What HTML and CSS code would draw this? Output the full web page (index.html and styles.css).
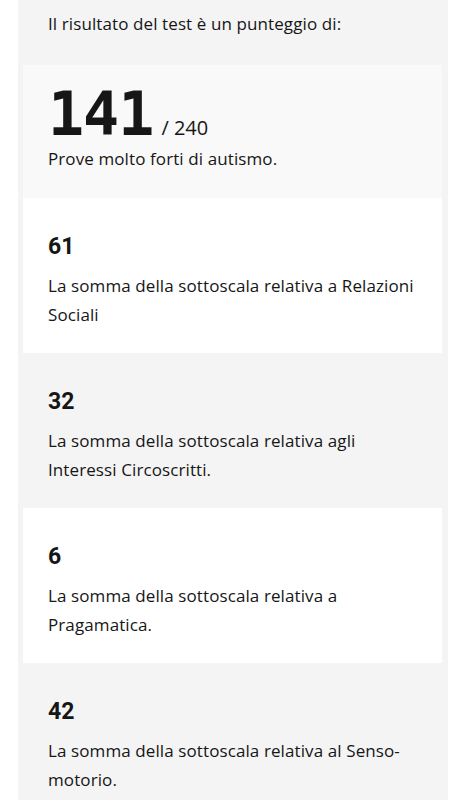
FILE: index.html
```html
<!DOCTYPE html>
<html lang="it">
<head>
<meta charset="utf-8">
<link rel="stylesheet" href="styles.css">
</head>
<body>
<main class="panel">
  <p class="intro">Il risultato del test è un punteggio di:</p>
  <section class="score">
    <div class="score-line"><span class="score-value">141</span><span class="score-max">/ 240</span></div>
    <p class="score-text">Prove molto forti di autismo.</p>
  </section>
  <section class="card card-white">
    <h2 class="card-num">61</h2>
    <p class="card-text">La somma della sottoscala relativa a Relazioni Sociali</p>
  </section>
  <section class="card card-gray">
    <h2 class="card-num">32</h2>
    <p class="card-text">La somma della sottoscala relativa agli Interessi Circoscritti.</p>
  </section>
  <section class="card card-white">
    <h2 class="card-num">6</h2>
    <p class="card-text">La somma della sottoscala relativa a Pragamatica.</p>
  </section>
  <section class="card card-gray">
    <h2 class="card-num">42</h2>
    <p class="card-text">La somma della sottoscala relativa al Senso-motorio.</p>
  </section>
</main>
</body>
</html>
```
FILE: styles.css
```css
html, body {
  margin: 0;
  padding: 0;
  background: #ffffff;
}
body {
  font-family: "Open Sans", "Noto Sans", sans-serif;
  color: #161616;
}
.panel {
  margin: 0 18px;
  background: #f4f4f4;
  padding: 0 6px 0 5px;
  display: flex;
  flex-direction: column;
}
.intro {
  margin: 0;
  padding: 12px 0 0 25px;
  height: 53px;
  font-size: 17px;
  line-height: 24px;
  letter-spacing: 0.1px;
}
.score {
  background: #f9f9f9;
  padding: 22px 25px 0;
  height: 111px;
}
.score-line {
  display: flex;
  align-items: baseline;
  gap: 8px;
}
.score-value {
  font-family: "DejaVu Sans Mono", monospace;
  font-weight: bold;
  font-size: 60px;
  line-height: 54px;
  letter-spacing: -1px;
}
.score-max {
  font-size: 20px;
}
.score-text {
  margin: 6px 0 0;
  font-size: 17px;
  line-height: 24px;
  letter-spacing: 0.1px;
}
.card {
  height: 155px;
  box-sizing: border-box;
  padding: 34px 25px 0;
}
.card-white { background: #ffffff; }
.card-gray { background: #f4f4f4; }
.card-num {
  margin: 0;
  font-family: "Roboto", sans-serif;
  font-weight: bold;
  font-size: 23px;
  line-height: 30px;
}
.card-text {
  margin: 9px 0 0;
  font-size: 17px;
  line-height: 29px;
  letter-spacing: 0.1px;
}
```
